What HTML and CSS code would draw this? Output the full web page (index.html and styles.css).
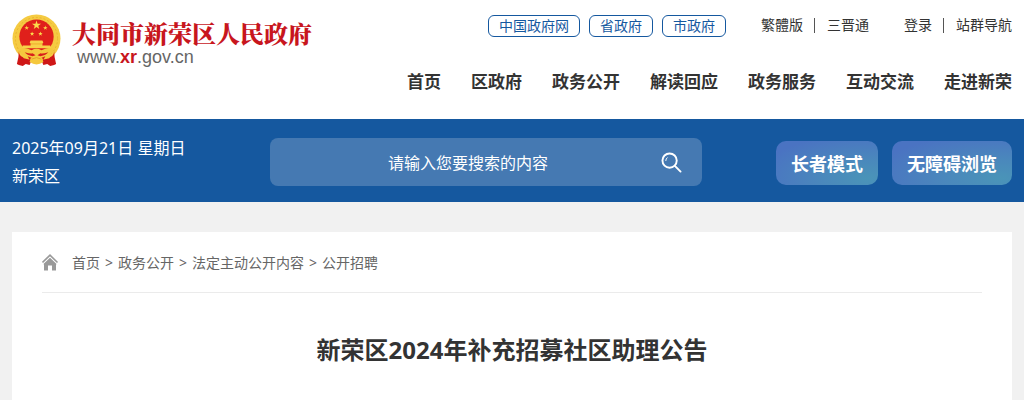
FILE: index.html
```
<!DOCTYPE html>
<html lang="zh-CN">
<head>
    <meta charset="UTF-8">
    <meta name="viewport" content="width=device-width, initial-scale=1.0">
    <title>新荣区2024年补充招募社区助理公告</title>
    <link rel="stylesheet" href="styles.css">
</head>
<body>
    <header class="header">
        <div class="wrap header-inner">
            <a class="logo" href="#">
                <svg class="emblem" viewBox="0 0 50 54" aria-hidden="true">
                    <circle cx="25" cy="25" r="24.500" fill="#f5cb42"/>
                    <circle cx="25" cy="25" r="21.500" fill="none" stroke="#e8b22e" stroke-dasharray="2 2"/>
                    <circle cx="25" cy="23" r="17.500" fill="#e0201b"/>
                    <!-- 五星 -->
                    <path id="star" fill="#fbdc4b" d="M25 6.500l1.100 3.300h3.500l-2.800 2.100 1 3.400-2.800-2.100-2.800 2.100 1-3.400-2.800-2.100h3.500z"/>
                    <use href="#star" transform="translate(2.500 8.500) scale(.5)"/>
                    <use href="#star" transform="translate(8 14.500) scale(.5)"/>
                    <use href="#star" transform="translate(16.500 14.500) scale(.5)"/>
                    <use href="#star" transform="translate(21.500 8.500) scale(.5)"/>
                    <!-- 天安门 -->
                    <path fill="#f8d149" d="M19 27h12l1 2-1 1v2h8l1 3H10l1-3h8v-2l-1-1z"/>
                    <path fill="#eead2c" d="M19 30h12v1H19z"/>
                    <!-- 绶带和齿轮 -->
                    <path fill="#cf1717" d="M7 38q0 7 9 7l4 2-2 5-4-1-3 2-4-1-2-1q2-7 2-13zM43 38q0 7-9 7l-4 2 2 5 4-1 3 2 4-1 2-1q-2-7-2-13z"/>
                    <path fill="#f5c83d" d="M8 36c5-3 8 0 12 1q5-3 10 0c4-1 7-4 12-1l-4 9q-13 4-26 0z"/>
                    <path fill="#d81e1c" d="M13 39q6 2 8 1l3 2-3 1q-6-1-8-4zM37 39q-6 2-8 1l-3 2 3 1q6-1 8-4zM16 43l5 2-3 2zM34 43l-5 2 3 2z"/>
                    <path fill="#f5c83d" d="M19 45q6-4 12 0l1 4q-7 5-14 0z"/>
                    <path fill="none" stroke="#e0a028" d="M20 46q5-3 10 0"/>
                </svg>
                <span class="logo-text">
                    <strong class="logo-name">大同市新荣区人民政府</strong>
                    <span class="logo-url">www.<b>xr</b>.gov.cn</span>
                </span>
            </a>
            <div class="header-right">
                <div class="top-links">
                    <div class="gov-links">
                        <a href="#">中国政府网</a>
                        <a href="#">省政府</a>
                        <a href="#">市政府</a>
                    </div>
                    <div class="link-pair">
                        <a href="#">繁體版</a><i></i><a href="#">三晋通</a>
                    </div>
                    <div class="link-pair">
                        <a href="#">登录</a><i></i><a href="#">站群导航</a>
                    </div>
                </div>
                <nav class="nav">
                    <a href="#">首页</a>
                    <a href="#">区政府</a>
                    <a href="#">政务公开</a>
                    <a href="#">解读回应</a>
                    <a href="#">政务服务</a>
                    <a href="#">互动交流</a>
                    <a href="#">走进新荣</a>
                </nav>
            </div>
        </div>
    </header>

    <div class="banner">
        <div class="wrap banner-inner">
            <div class="date">
                <p>2025年09月21日 星期日</p>
                <p>新荣区</p>
            </div>
            <form class="search">
                <input type="text" name="q" placeholder="请输入您要搜索的内容" aria-label="请输入您要搜索的内容">
                <button type="submit" aria-label="搜索">
                    <svg viewBox="0 0 22 22" aria-hidden="true">
                        <circle cx="9" cy="9" r="7.500"/>
                        <path d="M14.500 14.500l6 6"/>
                        <path class="shine" d="M5 9q0-2 1.500-3"/>
                    </svg>
                </button>
            </form>
            <div class="modes">
                <button type="button">长者模式</button>
                <button type="button">无障碍浏览</button>
            </div>
        </div>
    </div>

    <main class="wrap content">
        <div class="crumbs">
            <svg class="home" viewBox="0 0 17 17" aria-hidden="true">
                <path fill="none" stroke="#999" stroke-width="1.600" d="M.5 8.500L8 1.200l7.500 7.300"/>
                <path fill="#999" d="M8 3.800l6.800 6.500H14v6.200h-4v-5H6v5H2v-6.200h-.8z"/>
            </svg>
            <a href="#">首页</a>
            <span>&gt;</span>
            <a href="#">政务公开</a>
            <span>&gt;</span>
            <a href="#">法定主动公开内容</a>
            <span>&gt;</span>
            <a href="#">公开招聘</a>
        </div>
        <h1 class="title">新荣区2024年补充招募社区助理公告</h1>
    </main>
</body>
</html>
```

FILE: styles.css
```
* {
    box-sizing: border-box;
    margin: 0;
    padding: 0;
}
body {
    display: flex;
    flex-direction: column;
    min-height: 100vh;
    background: #f1f1f1;
    color: #333;
    font-family: "Noto Sans", "Noto Sans CJK SC", sans-serif;
    font-size: 14px;
}
a {
    color: inherit;
    text-decoration: none;
}
input, button {
    border: none;
    font-family: inherit;
}
button {
    cursor: pointer;
}
.wrap {
    width: calc(100% - 24px);
    max-width: 1200px;
    margin: 0 auto;
}

/* 头部 */
.header {
    background: #fff;
}
.header-inner {
    display: flex;
    justify-content: space-between;
    padding: 14px 0 24px;
}
.logo {
    display: flex;
    gap: 11px;
}
.emblem {
    width: 49px;
    height: 53px;
}
.logo-text {
    display: flex;
    flex-direction: column;
    padding-top: 6px;
    white-space: nowrap;
}
.logo-name {
    color: #c8161d;
    font-family: "Noto Serif CJK SC", "Noto Sans CJK SC", serif;
    font-size: 24px;
    font-weight: 900;
    line-height: 26px;
}
.logo-url {
    padding-left: 5px;
    color: #666;
    font-family: "Liberation Sans", Arial, sans-serif;
    font-size: 18px;
    line-height: 22px;
}
.logo-url b {
    color: #c8161d;
}
.header-right {
    display: flex;
    flex-direction: column;
    align-items: flex-end;
    gap: 30px;
    white-space: nowrap;
}
.top-links {
    display: flex;
    align-items: flex-start;
    gap: 35px;
    height: 24px;
    line-height: 22px;
}
.gov-links {
    display: flex;
    gap: 9px;
    padding-top: 1px;
}
.gov-links a {
    padding: 0 10px;
    border: 1px solid #15589f;
    border-radius: 6px;
    color: #15589f;
    line-height: 20px;
}
.link-pair {
    display: flex;
    align-items: center;
}
.link-pair i {
    width: 1px;
    height: 15px;
    margin: 0 12px 0 11px;
    background: #555;
}
.nav {
    display: flex;
    gap: 30px;
    font-size: 17px;
    font-weight: bold;
    line-height: 27px;
}

/* 搜索栏 */
.banner {
    background: #15589f;
}
.banner-inner {
    display: grid;
    grid-template-columns: 1fr 432px 1fr;
    align-items: center;
    padding: 15px 0 12px;
    color: #fff;
}
.date {
    font-size: 16px;
    line-height: 28px;
    white-space: nowrap;
}
.search {
    display: flex;
    height: 48px;
    margin-left: -26px;
    margin-right: 26px;
    border-radius: 8px;
    background: #4579b2;
}
.search input {
    flex: 1;
    min-width: 0;
    padding: 2px 0 0 5px;
    background: none;
    color: #fff;
    font-size: 16px;
    text-align: center;
    outline: none;
}
.search input::placeholder {
    color: #fff;
}
.search button {
    width: 41px;
    padding-right: 20px;
    background: none;
}
.search svg {
    display: block;
    width: 21px;
    height: 21px;
    fill: none;
    stroke: #fff;
    stroke-width: 2;
    stroke-linecap: round;
}
.search .shine {
    stroke-width: 1;
}
.modes {
    display: flex;
    justify-content: flex-end;
    gap: 14px;
    padding-top: 2px;
}
.modes button {
    height: 44px;
    padding: 0 15px;
    border-radius: 10px;
    background: radial-gradient(ellipse at 90% 85%, #4a94b8 0%, #4a88bc 35%, #4a73c2 85%);
    color: #fff;
    font-size: 18px;
    font-weight: bold;
    white-space: nowrap;
}

/* 正文 */
.content {
    flex: 1;
    margin-top: 30px;
    padding: 0 30px;
    background: #fff;
}
.crumbs {
    display: flex;
    align-items: center;
    gap: 5px;
    height: 61px;
    border-bottom: 1px solid #ebebeb;
    color: #666;
}
.home {
    width: 17px;
    height: 17px;
    margin-right: 8px;
}
.title {
    padding-top: 39px;
    font-size: 24px;
    line-height: 36px;
    text-align: center;
}
```
